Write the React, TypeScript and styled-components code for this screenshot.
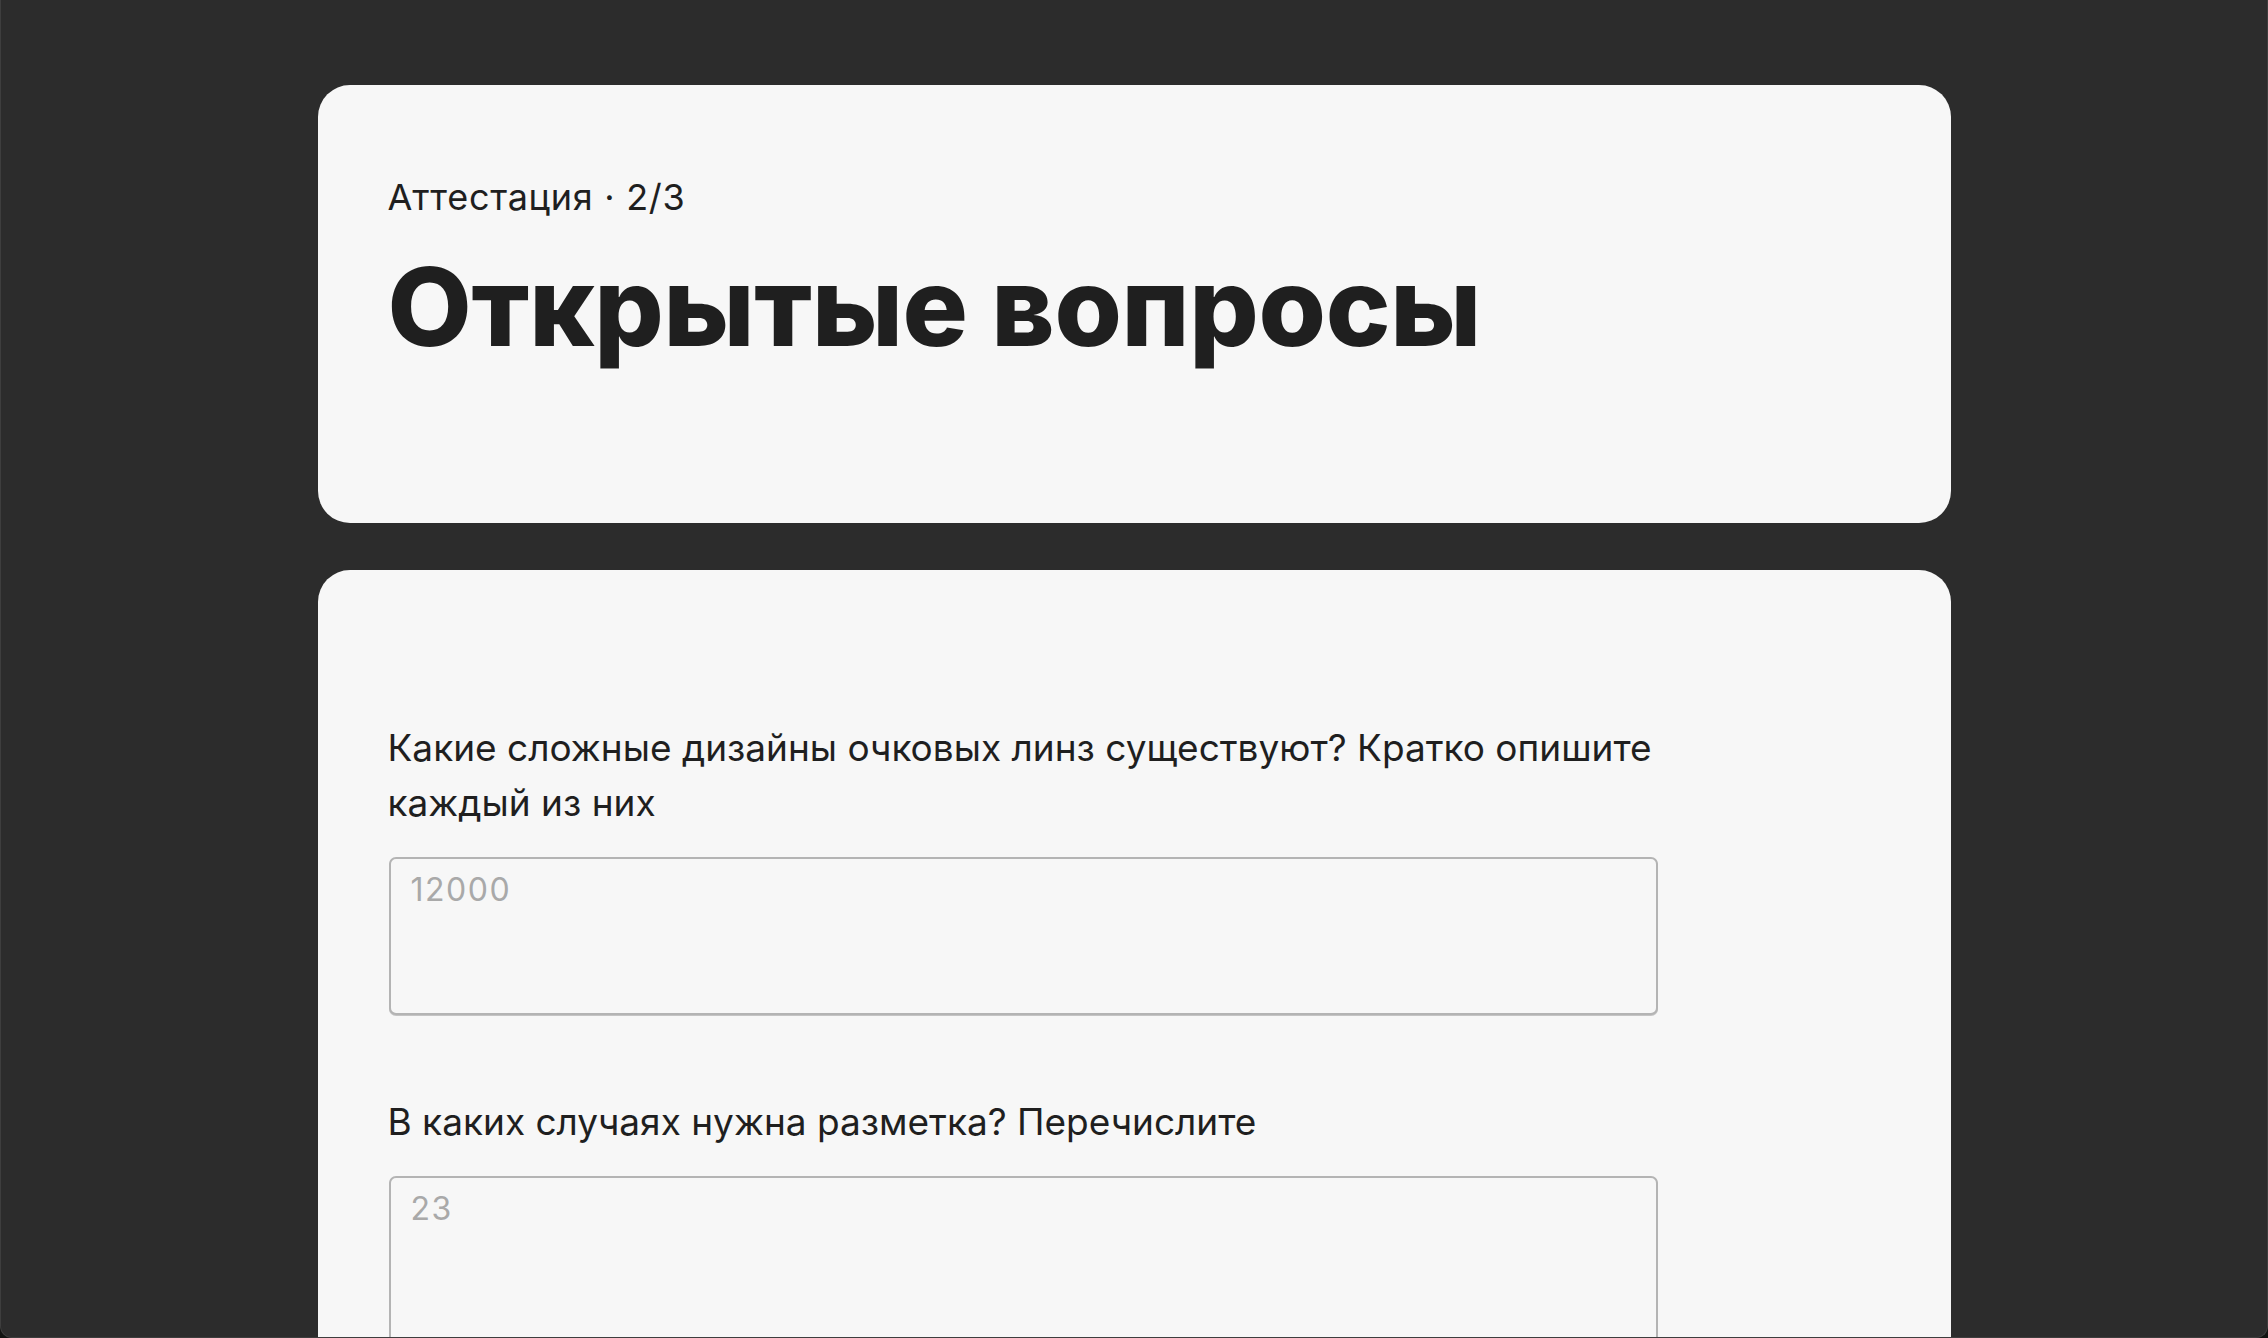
import React from 'react';
import styled, { createGlobalStyle } from 'styled-components';

const GlobalStyle = createGlobalStyle`
  html, body {
    margin: 0;
    padding: 0;
    background: #121412;
  }
  * {
    box-sizing: border-box;
  }
`;

const Window = styled.div`
  height: 100vh;
  overflow: hidden;
  background-color: #2c2c2c;
  border: 1px solid #3e3e3e;
  border-top: none;
  border-radius: 0 0 12px 12px;
  padding-top: 85px;
  display: flex;
  flex-direction: column;
  align-items: center;
  gap: 47px;
  font-family: Inter, 'Noto Sans', sans-serif;
  color: #1f1f1f;
`;

const Card = styled.section<{ $padTop: number; $padBottom: number }>`
  width: 1633px;
  flex-shrink: 0;
  background-color: #f7f7f7;
  border-radius: 32px;
  padding: ${(p) => p.$padTop}px 71px ${(p) => p.$padBottom}px 70px;
`;

const Stage = styled.div`
  font-size: 36px;
  line-height: 1.2;
  font-weight: 400;
  letter-spacing: 0.7px;
`;

const Title = styled.h1`
  margin: 28px 0 0;
  font-size: 109px;
  line-height: 1.1;
  font-weight: 800;
  letter-spacing: -0.3px;
`;

const QuestionList = styled.div`
  display: flex;
  flex-direction: column;
  gap: 79px;
`;

const Field = styled.label`
  display: flex;
  flex-direction: column;
  gap: 27px;
  width: 1270px;
`;

const Question = styled.span`
  font-size: 37px;
  line-height: 55px;
  font-weight: 400;
  letter-spacing: 0;
`;

const Answer = styled.textarea<{ $height: number }>`
  display: block;
  width: 1269px;
  margin: 0 0 0 1px;
  height: ${(p) => p.$height}px;
  resize: none;
  padding: 12px 20px;
  background-color: #f7f7f7;
  border: 2px solid #b4b4b4;
  border-radius: 7px;
  box-shadow: 0 1px 0 #c4c4c4;
  font-family: Inter, 'Noto Sans', sans-serif;
  font-size: 32px;
  line-height: 1.2;
  letter-spacing: 1.5px;
  color: #1f1f1f;
  outline: none;

  &::placeholder {
    color: #a9a9a9;
  }
`;

const questions = [
  {
    text: 'Какие сложные дизайны очковых линз существуют? Кратко опишите каждый из них',
    hint: '12000',
    height: 158,
  },
  {
    text: 'В каких случаях нужна разметка? Перечислите',
    hint: '23',
    height: 240,
  },
];

export default function App() {
  return (
    <>
      <GlobalStyle />
      <Window>
        <Card $padTop={91} $padBottom={156}>
          <Stage>Аттестация · 2/3</Stage>
          <Title>Открытые вопросы</Title>
        </Card>
        <Card $padTop={150} $padBottom={80}>
          <QuestionList>
            {questions.map((q) => (
              <Field key={q.hint}>
                <Question>{q.text}</Question>
                <Answer placeholder={q.hint} $height={q.height} />
              </Field>
            ))}
          </QuestionList>
        </Card>
      </Window>
    </>
  );
}
